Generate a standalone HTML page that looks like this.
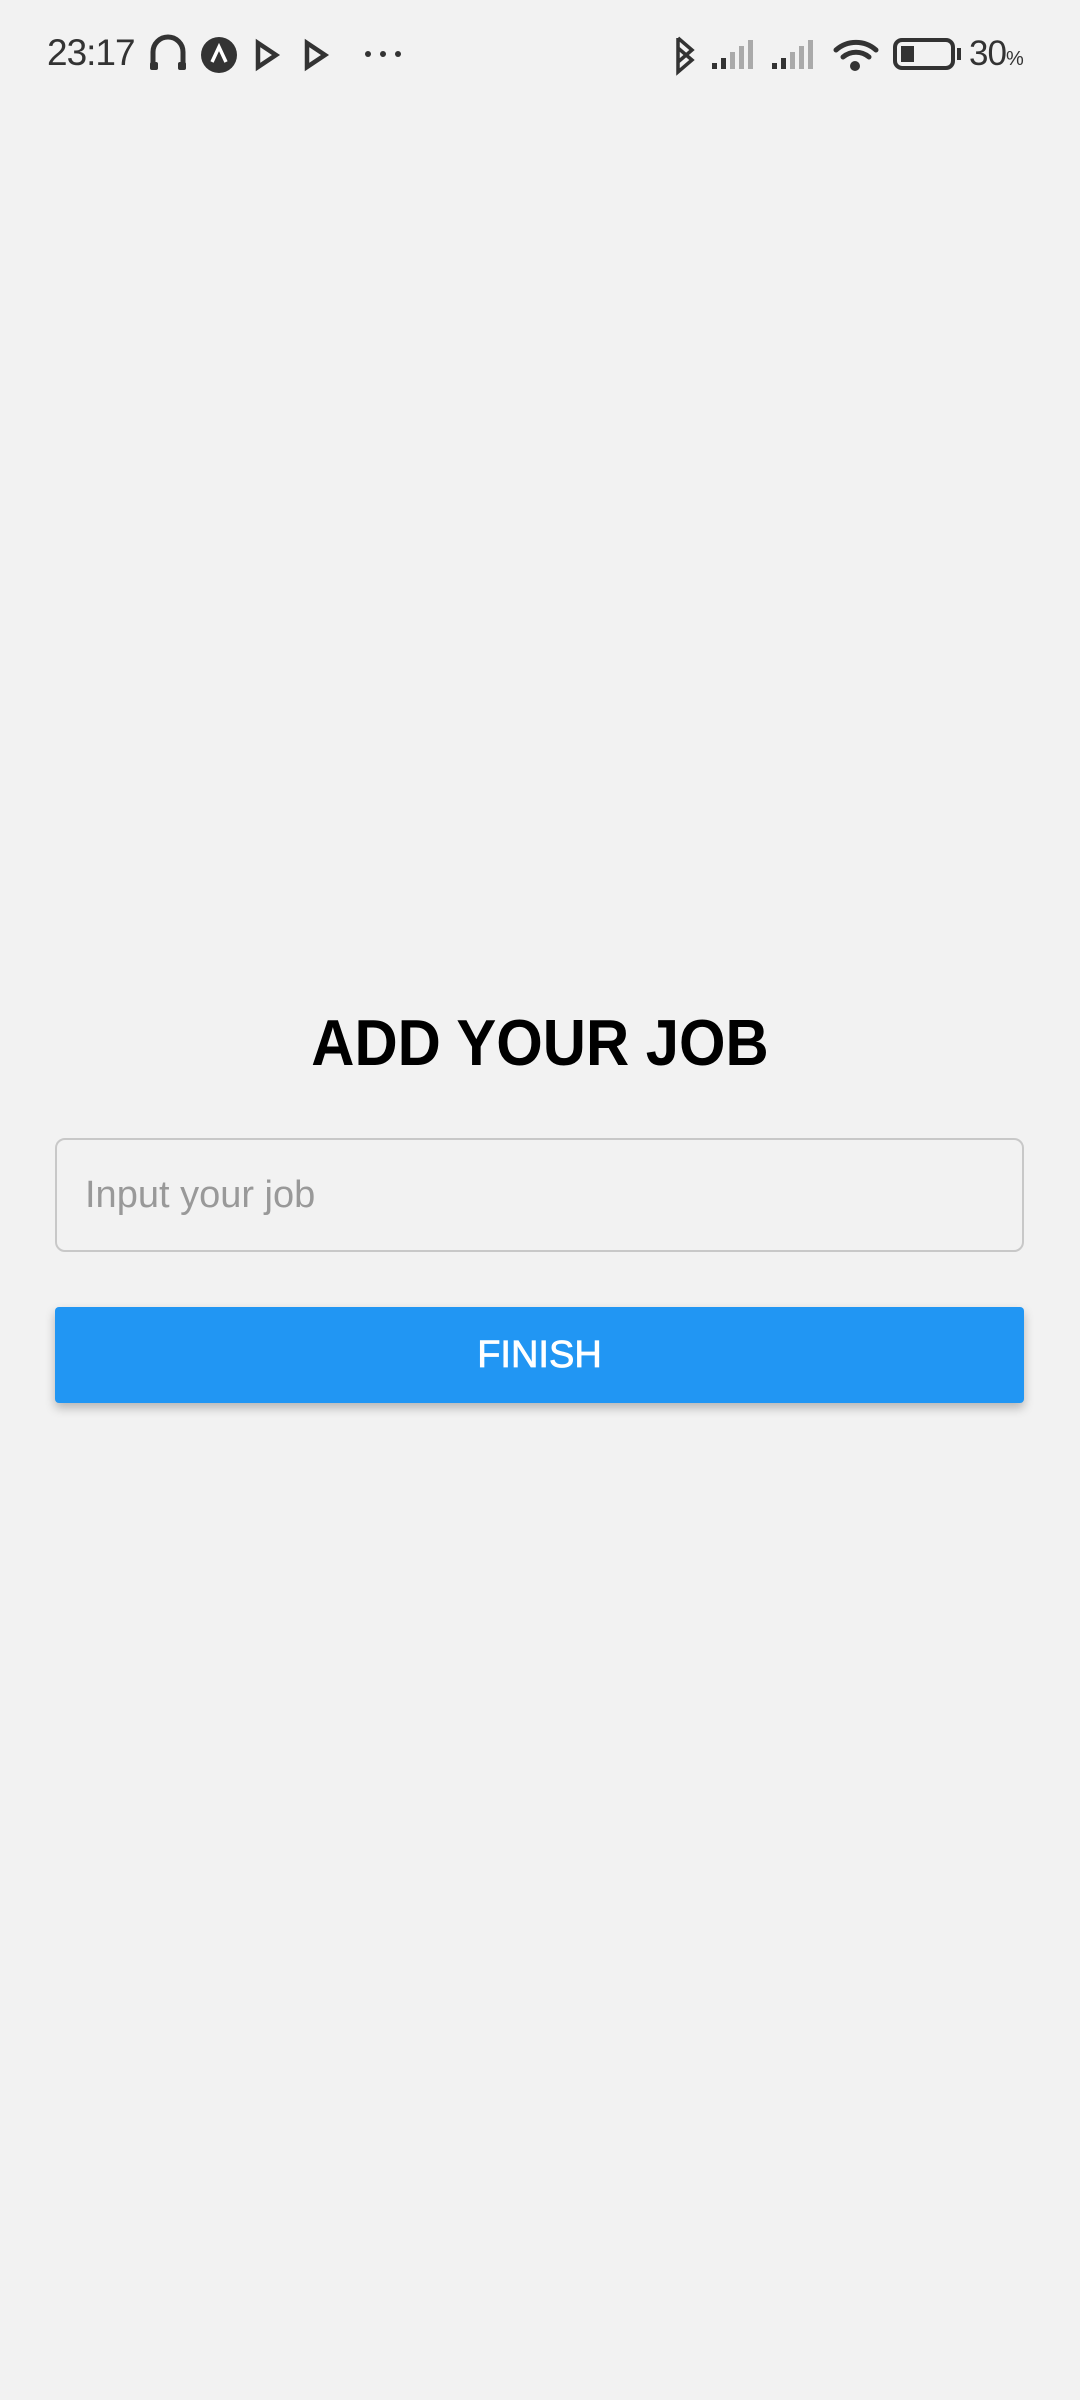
<!DOCTYPE html>
<html><head><meta charset="utf-8"><style>
html,body{margin:0;padding:0;width:1080px;height:2400px;background:#f2f2f2;overflow:hidden;font-family:"Liberation Sans",sans-serif;position:relative}
.abs{position:absolute}
</style></head><body>
<div class="abs" style="left:47px;top:32px;font-size:37px;color:#333;letter-spacing:-1px">23:17</div>
<svg class="abs" style="left:0;top:0" width="1080" height="110">
 <g fill="none" stroke="#333" stroke-width="5">
  <path d="M153 66 V52 a15 15 0 0 1 30 0 V66"/>
  <path d="M258 43 L276 55 L258 67 Z" stroke-width="4.5"/>
  <path d="M307 43 L325 55 L307 67 Z" stroke-width="4.5"/>
  <path d="M678 38 L692 50 L678 62 M678 38 V72 L692 60 L678 48" stroke-width="3.5"/>
  <rect x="895" y="40" width="58" height="28" rx="7" stroke-width="4"/>
 </g>
 <rect x="150" y="62" width="8" height="8" rx="2" fill="#333"/><rect x="178" y="62" width="8" height="8" rx="2" fill="#333"/>
 <circle cx="219" cy="55" r="18" fill="#333"/>
 <path d="M212 62 L219 47 L226 62" fill="none" stroke="#fff" stroke-width="3.5"/>
 <circle cx="368" cy="54" r="3" fill="#333"/><circle cx="383" cy="54" r="3" fill="#333"/><circle cx="398" cy="54" r="3" fill="#333"/>
 <g fill="#333"><rect x="712" y="63" width="5" height="6"/><rect x="721" y="58" width="5" height="11"/></g>
 <g fill="#aaa"><rect x="730" y="52" width="5" height="17"/><rect x="739" y="46" width="5" height="23"/><rect x="748" y="40" width="5" height="29"/></g>
 <g fill="#333"><rect x="772" y="63" width="5" height="6"/><rect x="781" y="58" width="5" height="11"/></g>
 <g fill="#aaa"><rect x="790" y="52" width="5" height="17"/><rect x="799" y="46" width="5" height="23"/><rect x="808" y="40" width="5" height="29"/></g>
 <g fill="none" stroke="#333" stroke-width="5" stroke-linecap="round"><path d="M836 50 a30 30 0 0 1 40 0"/><path d="M843 57 a20 20 0 0 1 26 0"/></g>
 <circle cx="855" cy="66" r="5" fill="#333"/>
 <rect x="901" y="46" width="13" height="16" fill="#333"/>
 <rect x="957" y="48" width="4" height="12" fill="#333"/>
</svg>
<div class="abs" style="left:969px;top:34px;font-size:35px;color:#333;letter-spacing:-1px">30<span style="font-size:20px">%</span></div>
<div class="abs" style="left:0;width:1080px;top:1005px;text-align:center;font-size:65px;font-weight:bold;color:#000;transform:scaleX(0.92)">ADD YOUR JOB</div>
<div class="abs" style="left:55px;top:1138px;width:965px;height:110px;border:2px solid #c8c8c8;border-radius:10px;box-sizing:content-box"></div>
<div class="abs" style="left:85px;top:1174px;font-size:38px;color:#999">Input your job</div>
<div class="abs" style="left:55px;top:1307px;width:969px;height:96px;background:#2196f3;border-radius:4px;box-shadow:0 5px 10px rgba(0,0,0,0.25);color:#fff;font-size:38px;text-align:center;line-height:96px;-webkit-text-stroke:0.8px #fff">FINISH</div>
</body></html>
